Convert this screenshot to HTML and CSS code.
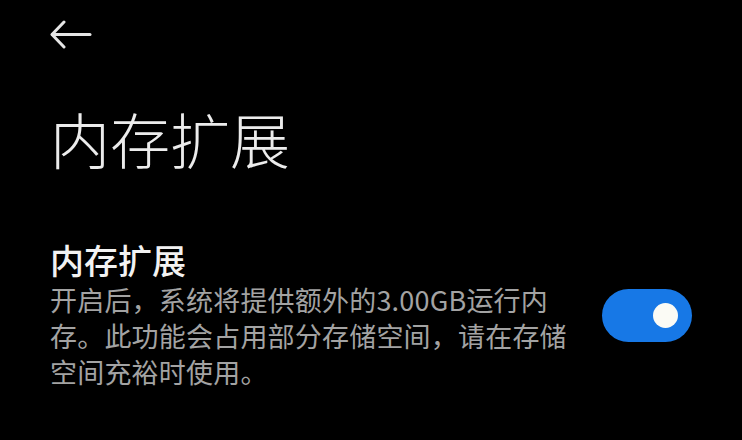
FILE: index.html
```html
<!DOCTYPE html>
<html lang="zh-CN">
<head>
<meta charset="utf-8">
<title>内存扩展</title>
<link rel="stylesheet" href="styles.css">
</head>
<body>
<div class="screen">
  <header class="topbar">
    <button class="back" aria-label="返回">
      <svg width="42" height="30" viewBox="0 0 42 30" fill="none" stroke="#e6e6e6" stroke-width="3" stroke-linecap="round" stroke-linejoin="round">
        <path d="M14 2 L2 14.5 L14 27"/>
        <path d="M2.5 14.5 H40"/>
      </svg>
    </button>
  </header>
  <h1 class="page-title">内存扩展</h1>
  <section class="setting">
    <div class="setting-text">
      <h2 class="setting-name">内存扩展</h2>
      <p class="setting-desc">开启后，系统将提供额外的3.00GB运行内存。此功能会占用部分存储空间，请在存储空间充裕时使用。</p>
    </div>
    <div class="switch on" role="switch" aria-checked="true">
      <span class="knob"></span>
    </div>
  </section>
</div>
</body>
</html>
```
FILE: styles.css
```css
html, body {
  margin: 0;
  padding: 0;
  background: #000;
}

.screen {
  width: 742px;
  height: 440px;
  overflow: hidden;
  font-family: "Noto Sans CJK SC", "Noto Sans", sans-serif;
  color: #eee;
  box-sizing: border-box;
  padding: 0 0 0 50px;
}

.topbar {
  display: flex;
  align-items: center;
  height: 70px;
}

.back {
  background: none;
  border: 0;
  padding: 0;
  margin: 0;
  display: flex;
  align-items: center;
  cursor: pointer;
}

.back svg {
  display: block;
}

.page-title {
  margin: 0;
  margin-top: 28px;
  font-size: 60px;
  line-height: 80px;
  font-weight: 300;
  color: #ececec;
}

.setting {
  display: flex;
  align-items: center;
  gap: 30px;
  margin-top: 60px;
}

.setting-text {
  width: 522px;
}

.setting-name {
  margin: 0;
  font-size: 34px;
  line-height: 44px;
  font-weight: 500;
  color: #f2f2f2;
}

.setting-desc {
  margin: 0;
  font-size: 27px;
  line-height: 36px;
  font-weight: 400;
  color: #a3a3a3;
  letter-spacing: 0.2px;
}

.switch {
  width: 90px;
  height: 53px;
  border-radius: 27px;
  background: #1778e6;
  display: flex;
  align-items: center;
  justify-content: flex-end;
  padding: 0 14px;
  box-sizing: border-box;
  margin-top: 2px;
}

.knob {
  width: 25px;
  height: 25px;
  border-radius: 50%;
  background: #fbfbf5;
}
```
